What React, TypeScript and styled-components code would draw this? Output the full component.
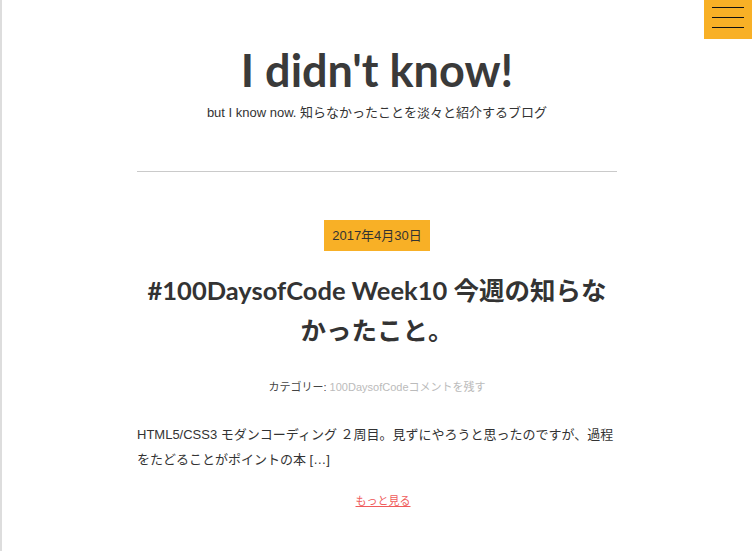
import styled, { createGlobalStyle } from "styled-components";

const GlobalStyle = createGlobalStyle`
  html, body {
    margin: 0;
    padding: 0;
    background: #fff;
  }
  body {
    font-family: "Liberation Sans", "Noto Sans CJK JP", sans-serif;
    color: #333;
  }
`;

const Page = styled.div`
  position: relative;
  min-height: 551px;
  border-left: 2px solid #ddd;
  box-sizing: border-box;
`;

const MenuButton = styled.button`
  position: absolute;
  top: 0;
  right: 0;
  width: 48px;
  height: 39px;
  padding: 7px 8px 0;
  border: none;
  background: #f8b026;
  display: flex;
  flex-direction: column;
  gap: 9px;
  box-sizing: border-box;
  cursor: pointer;
`;

const MenuLine = styled.span`
  display: block;
  width: 32px;
  height: 1px;
  background: #111;
`;

const Wrapper = styled.div`
  max-width: 480px;
  margin: 0 auto;
  padding-top: 43px;
`;

const Header = styled.header`
  text-align: center;
  padding-bottom: 48px;
  border-bottom: 1px solid #cacaca;
`;

const SiteTitle = styled.h1`
  margin: 0;
  font-family: Lato, "Noto Sans CJK JP", sans-serif;
  font-size: 45px;
  font-weight: 700;
  line-height: 1.2;
  color: #3a3a3a;
`;

const Tagline = styled.p`
  margin: 6px 0 0;
  font-size: 13px;
  line-height: 20px;
  color: #333;
`;

const Article = styled.article`
  padding-top: 48px;
  text-align: center;
`;

const DateBadge = styled.span`
  display: inline-block;
  padding: 0 8px;
  height: 31px;
  line-height: 31px;
  background: #f8b026;
  font-size: 13px;
  color: #333;
`;

const PostTitle = styled.h2`
  margin: 19px 0 0;
  font-family: Lato, "Noto Sans CJK JP", sans-serif;
  font-size: 25.5px;
  font-weight: 700;
  line-height: 40px;
  color: #333;
`;

const Meta = styled.div`
  margin-top: 27px;
  font-size: 11px;
  line-height: 20px;
  color: #444;
`;

const MetaLink = styled.a`
  color: #bbb;
  text-decoration: none;
`;

const Excerpt = styled.p`
  margin: 25px 0 0;
  text-align: left;
  font-size: 13px;
  line-height: 25px;
  color: #333;
`;

const MoreLink = styled.a`
  display: inline-block;
  margin-top: 19px;
  padding-left: 12px;
  font-size: 11px;
  line-height: 20px;
  color: #ef5b5b;
  text-decoration: underline;
`;

export default function App() {
  return (
    <>
      <GlobalStyle />
      <Page>
        <MenuButton aria-label="menu">
          <MenuLine />
          <MenuLine />
          <MenuLine />
        </MenuButton>
        <Wrapper>
          <Header>
            <SiteTitle>I didn't know!</SiteTitle>
            <Tagline>but I know now. 知らなかったことを淡々と紹介するブログ</Tagline>
          </Header>
          <Article>
            <DateBadge>2017年4月30日</DateBadge>
            <PostTitle>#100DaysofCode Week10 今週の知らなかったこと。</PostTitle>
            <Meta>
              カテゴリー: <MetaLink href="#">100DaysofCode</MetaLink>
              <MetaLink href="#">コメントを残す</MetaLink>
            </Meta>
            <Excerpt>
              HTML5/CSS3 モダンコーディング ２周目。見ずにやろうと思ったのですが、過程をたどることがポイントの本 […]
            </Excerpt>
            <MoreLink href="#">もっと見る</MoreLink>
          </Article>
        </Wrapper>
      </Page>
    </>
  );
}
